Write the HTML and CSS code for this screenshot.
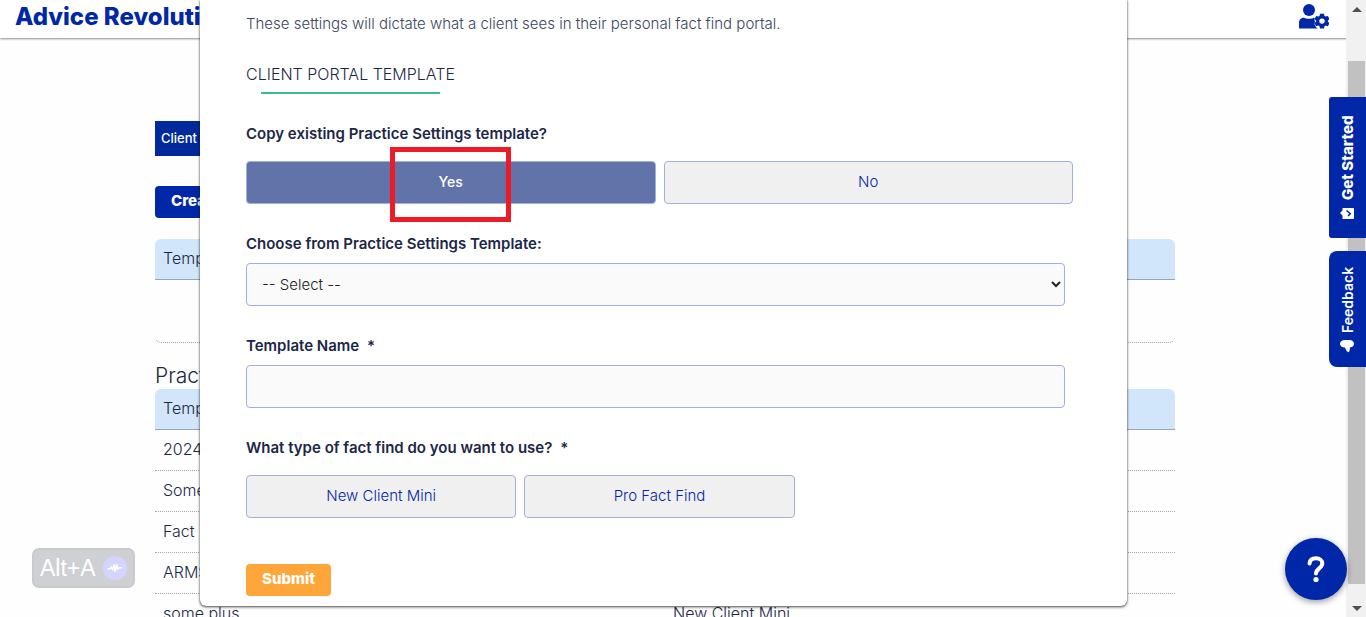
FILE: index.html
```html
<!doctype html>
<html lang="en">
<head>
<meta charset="utf-8">
<title>Advice Revolution</title>
<meta name="viewport" content="width=device-width, initial-scale=1">
<link rel="stylesheet" href="styles.css">
</head>
<body>
	<div class="page">
		<header class="topbar">
			<a class="brand" href="#">Advice Revolution</a>
			<a class="account" href="#" aria-label="Account settings">
				<svg width="31" height="25" viewBox="0 0 31 25">
					<circle cx="11" cy="6" r="6"/>
					<path d="M1 24.500v-5.500c0-3.500 2.200-5.300 5-5.300 1.500.7 3 1 5 1s3.500-.3 5-1l.8.2c-.5 1.500-.4 2.500.4 3.800-1 1.500-.8 3 .3 4 0 1 .8 2 2.500 2.800z"/>
					<path fill-rule="evenodd" d="M22 9.800h4l.5 2.100 1.300.7 2-.7 1.700 3-1.500 1.500v1.400l1.500 1.500-1.700 3-2-.7-1.300.7-.5 2.100h-4l-.5-2.100-1.300-.7-2 .7-1.700-3 1.500-1.500v-1.400l-1.500-1.500 1.700-3 2 .7 1.300-.7zM24 14.400a2.700 2.700 0 1 0 0 5.400 2.700 2.700 0 0 0 0-5.400z"/>
				</svg>
			</a>
		</header>

		<div class="wrap">
			<main class="content">
				<nav class="tabs">
					<a class="tab" href="#">Client Portal</a>
				</nav>
				<button class="btn create" type="button">Create Template</button>

				<table class="list">
					<thead>
						<tr><th>Template Name</th><th></th></tr>
					</thead>
					<tbody>
						<tr class="empty"><td></td><td></td></tr>
					</tbody>
				</table>

				<h2>Practice Settings</h2>
				<table class="list">
					<thead>
						<tr><th>Template Name</th><th></th></tr>
					</thead>
					<tbody>
						<tr><td>2024</td><td></td></tr>
						<tr><td>Some</td><td></td></tr>
						<tr><td>Fact</td><td></td></tr>
						<tr><td>ARMS</td><td></td></tr>
						<tr><td>some plus</td><td>New Client Mini</td></tr>
					</tbody>
				</table>
			</main>
		</div>
	</div>

	<!-- template dialog -->
	<div class="overlay">
		<form class="modal">
			<p class="intro">These settings will dictate what a client sees in their personal fact find portal.</p>
			<h3>CLIENT PORTAL TEMPLATE</h3>

			<div class="field">
				<span class="label" id="copyLabel">Copy existing Practice Settings template?</span>
				<div class="choices two" role="group" aria-labelledby="copyLabel">
					<button class="choice active" type="button">Yes<span class="marker"></span></button>
					<button class="choice" type="button">No</button>
				</div>
			</div>

			<div class="field">
				<label class="label" for="source">Choose from Practice Settings Template:</label>
				<select class="control" id="source">
					<option>-- Select --</option>
				</select>
			</div>

			<div class="field">
				<label class="label" for="templateName">Template Name <span class="req">*</span></label>
				<input class="control" id="templateName" type="text">
			</div>

			<div class="field">
				<span class="label" id="typeLabel">What type of fact find do you want to use? <span class="req">*</span></span>
				<div class="choices three" role="group" aria-labelledby="typeLabel">
					<button class="choice" type="button">New Client Mini</button>
					<button class="choice" type="button">Pro Fact Find</button>
				</div>
			</div>

			<button class="btn submit" type="button">Submit</button>
		</form>
	</div>

	<div class="scrollbar">
		<span class="arrow up"></span>
		<span class="thumb"></span>
		<span class="arrow down"></span>
	</div>

	<div class="side">
		<button class="side-btn started" type="button">
			<svg width="14" height="14" viewBox="0 0 14 14">
				<path fill="#fff" d="M1 2.500h3.500L7 0l2.500 2.500h2.500V13a1 1 0 0 1-1 1H2a1 1 0 0 1-1-1z"/>
				<path fill="none" stroke="#0027a8" stroke-width="1.500" d="M4 8l2.300 2.300L9.500 6.500"/>
			</svg>
			Get Started
		</button>
		<button class="side-btn feedback" type="button">
			<svg width="14" height="14" viewBox="0 0 14 14">
				<path fill="#fff" d="M5 1h4.500C12 1 14 2.500 14 4.700c0 2-1.500 3.500-4 3.800-.2 2.500-.5 4-1.200 4.700C7 12.800 5.800 11 5 8.500 2 8.500 0 7 0 4.700 0 2.500 2 1 5 1z"/>
			</svg>
			Feedback
		</button>
	</div>

	<button class="help" type="button" aria-label="Help">
		<svg width="20" height="28" viewBox="0 0 20 28">
			<path fill="none" stroke="#fff" stroke-width="4" stroke-linecap="round" d="M3.500 8.500C3.800 5 6.500 3.300 10 3.300c3.700 0 6.300 2 6.300 5.200 0 4.700-6.300 5-6.300 10"/>
			<circle cx="10" cy="24.500" r="2.600" fill="#fff"/>
		</svg>
	</button>

	<div class="shortcut">
		Alt+A
		<svg width="24" height="24" viewBox="0 0 24 24">
			<circle cx="12" cy="12" r="12" fill="#d3d5ff"/>
			<path fill="none" stroke="#fff" stroke-width="1.500" stroke-linejoin="round" stroke-linecap="round" d="M5 12.800h2l1.500-2 1 3 1.800-5 .7 6.500 1.800-6.500 1 4.500 1.200-1.500h2.500"/>
		</svg>
	</div>
</body>
</html>
```

FILE: styles.css
```css
* {
	box-sizing: border-box;
}
body {
	margin: 0;
	height: 100vh;
	overflow: hidden;
	background: #fefefe;
	color: #1c2747;
	font: 300 15px/20px Inter, "Liberation Sans", sans-serif;
}
button, input, select {
	font: inherit;
	color: inherit;
}
a {
	text-decoration: none;
}

/* page behind the dialog */
.page {
	height: 100%;
	overflow: hidden;
}
.topbar {
	display: flex;
	justify-content: space-between;
	align-items: center;
	height: 38px;
	padding: 0 37px 5px 15px;
	background: #fff;
	box-shadow: 0 1px 2px rgba(0,0,0,.45);
}
.brand {
	color: #0027a8;
	font-size: 24px;
	font-weight: 800;
}
.account {
	display: flex;
	fill: #0027a8;
}
.wrap {
	padding: 83px 36px 0 0;
}
.content {
	max-width: 1020px;
	margin: 0 auto;
}
.tabs {
	display: flex;
	margin-bottom: 30px;
}
.tab {
	padding: 7px 6px 8px;
	background: #002a9b;
	color: #fff;
	font-size: 13px;
	font-weight: 500;
}
.btn {
	display: block;
	height: 32px;
	padding: 0 16px 2px;
	border: 0;
	border-radius: 4px;
	color: #fff;
	font-weight: 800;
}
.create {
	margin-bottom: 21px;
	background: #0027a8;
}
.list {
	width: 100%;
	table-layout: fixed;
	border-collapse: separate;
	border-spacing: 0;
	font-size: 16px;
}
.list th, .list td {
	height: 41px;
	padding: 0 8px 2px;
	text-align: left;
	font-weight: 300;
}
.list th {
	background: #d1e5fb;
	border-bottom: 1px solid #98a3b8;
}
.list td {
	border-bottom: 1px dotted #a0a3b4;
}
.list th:first-child {
	border-top-left-radius: 6px;
}
.list th:last-child {
	border-top-right-radius: 6px;
}
.list .empty td {
	height: 63px;
}
.empty td:first-child {
	border-bottom-left-radius: 6px;
}
.empty td:last-child {
	border-bottom-right-radius: 6px;
}
h2 {
	margin: 20px 0 0;
	font-size: 21px;
	line-height: 26px;
	font-weight: 300;
}

/* dialog */
.overlay {
	position: absolute;
	top: 0;
	left: 0;
	right: 39px;
	display: flex;
	justify-content: center;
}
.modal {
	width: 90%;
	max-width: 927px;
	padding: 14px 54px 10px 46px;
	background: #fff;
	border-radius: 0 0 6px 6px;
	box-shadow: 0 1px 3px rgba(0,0,0,.7), 0 0 1px #555;
}
.intro {
	margin: 0 0 28px;
	color: #3b4560;
}
h3 {
	width: fit-content;
	margin: 0 0 30px;
	font-size: 16px;
	line-height: 24px;
	font-weight: 300;
}
h3::after {
	content: "";
	display: block;
	height: 2px;
	margin: 6px 15px 0;
	background: #3dbb91;
}
.field {
	margin-bottom: 30px;
}
.label {
	display: block;
	margin-bottom: 9px;
	font-weight: 600;
}
.req {
	margin-left: 4px;
}
.choices {
	display: grid;
	gap: 8px;
	padding-top: 8px;
}
.two {
	grid-template-columns: 1fr 1fr;
}
.three {
	grid-template-columns: 1fr 1fr 1fr;
}
.choice {
	position: relative;
	height: 43px;
	padding: 0 0 2px;
	background: #f0f0f0;
	border: 1px solid #a3b0df;
	border-radius: 4px;
	color: #0027a8;
}
.choice.active {
	background: #6173a9;
	color: #fff;
	font-size: 14px;
	font-weight: 500;
}
.marker {
	position: absolute;
	top: -15px;
	left: 50%;
	width: 121px;
	height: 75px;
	margin-left: -61px;
	border: 5px solid #ed1c24;
}
.control {
	display: block;
	width: calc(100% - 8px);
	height: 43px;
	padding: 0 11px;
	background: #fafafa;
	border: 1px solid #a3b0df;
	border-radius: 4px;
}
select.control {
	padding: 0 7px 0 11px;
	color: #222;
}
.submit {
	margin-top: 46px;
	background: #ffa63b;
}

/* scroll bar */
.scrollbar {
	position: absolute;
	top: 0;
	right: 0;
	bottom: 0;
	display: flex;
	flex-direction: column;
	align-items: center;
	width: 20px;
	padding: 7px 1px 6px 2px;
	background: #f1f1f1;
}
.thumb {
	flex: 1;
	width: 100%;
	margin: 49px 0 22px;
	background: #c1c1c1;
}
.arrow {
	border: 5px solid transparent;
}
.up {
	border-top: 0;
	border-bottom-color: #505050;
}
.down {
	border-bottom: 0;
	border-top-color: #505050;
}

/* floating buttons */
.side {
	position: absolute;
	top: 97px;
	right: 0;
	display: flex;
	flex-direction: column;
	gap: 13px;
}
.side-btn {
	display: flex;
	align-items: center;
	gap: 6px;
	width: 37px;
	padding: 14px 8px;
	border: 0;
	background: #0027a8;
	color: #fff;
	font-size: 14px;
	writing-mode: vertical-rl;
	transform: rotate(180deg);
}
.started {
	height: 141px;
	padding-top: 18px;
	border-radius: 0 3px 3px 0;
	font-size: 15px;
	font-weight: 800;
}
.started svg {
	transform: rotate(90deg);
}
.feedback {
	height: 116px;
	border-radius: 0 8px 8px 0;
	font-weight: 600;
}
.feedback svg {
	transform: rotate(180deg);
}
.help {
	position: absolute;
	right: 19px;
	bottom: 17px;
	display: flex;
	align-items: center;
	justify-content: center;
	width: 62px;
	height: 62px;
	border: 0;
	border-radius: 50%;
	background: #0027a8;
	box-shadow: 0 2px 6px rgba(0,0,0,.4);
}
.shortcut {
	position: absolute;
	left: 32px;
	bottom: 29px;
	display: flex;
	align-items: center;
	gap: 7px;
	height: 40px;
	padding: 0 6px;
	border: 2px solid #c9cacb;
	border-radius: 7px;
	background: #cfd0d4;
	color: #fff;
	font: 500 23px/26px "Liberation Sans", sans-serif;
}
```
